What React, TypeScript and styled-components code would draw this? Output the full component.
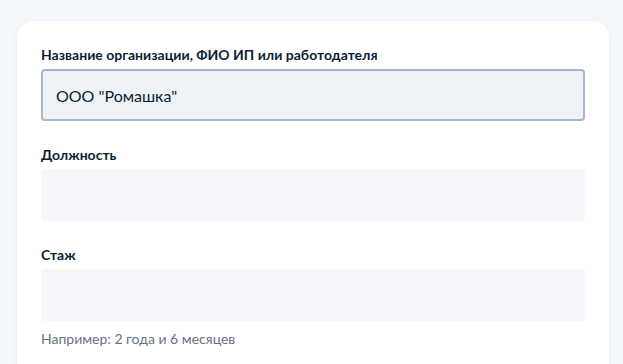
import React, { useState } from "react";
import styled, { createGlobalStyle } from "styled-components";

const GlobalStyle = createGlobalStyle`
    html, body {
        margin: 0;
        padding: 0;
        background: #f4f7fb;
        font-family: Lato, "Open Sans", "Liberation Sans", sans-serif;
        color: #0b1f33;
    }
`;

export default function App() {
    const [formData, setFormData] = useState({
        company: 'ООО "Ромашка"',
        position: "",
        experience: "",
    });

    const handleChange = (e: React.ChangeEvent<HTMLInputElement>) => {
        const { name, value } = e.target;
        setFormData((prev) => ({ ...prev, [name]: value }));
    };

    return (
        <Page>
            <GlobalStyle />
            <Card>
                <Field>
                    <Label htmlFor="company">Название организации, ФИО ИП или работодателя</Label>
                    <Input id="company" name="company" value={formData.company} onChange={handleChange} $active />
                </Field>
                <Field>
                    <Label htmlFor="position">Должность</Label>
                    <Input id="position" name="position" value={formData.position} onChange={handleChange} />
                </Field>
                <Field>
                    <Label htmlFor="experience">Стаж</Label>
                    <Input id="experience" name="experience" value={formData.experience} onChange={handleChange} />
                    <Hint>Например: 2 года и 6 месяцев</Hint>
                </Field>
            </Card>
        </Page>
    );
}

const Page = styled.div`
    padding: 21px 14px 0 17px;
    height: 364px;
    box-sizing: border-box;
    overflow: hidden;
`;

const Card = styled.div`
    background: #ffffff;
    border-radius: 16px;
    padding: 24px 24px 40px 24px;
    display: flex;
    flex-direction: column;
    gap: 24px;
    box-shadow: 0 1px 6px rgba(11, 31, 51, 0.04);
`;

const Field = styled.div`
    display: flex;
    flex-direction: column;
`;

const Label = styled.label`
    font-size: 14px;
    line-height: 20px;
    font-weight: 700;
    color: #0b1f33;
    margin-bottom: 4px;
`;

const Input = styled.input<{ $active?: boolean }>`
    height: 52px;
    box-sizing: border-box;
    border-radius: 4px;
    border: 2px solid ${(p) => (p.$active ? "#a9b7ca" : "#f5f7fa")};
    background: ${(p) => (p.$active ? "#eef2f7" : "#f5f7fa")};
    padding: 0 13px;
    font-family: inherit;
    font-size: 16px;
    color: #0b1f33;
    outline: none;
`;

const Hint = styled.div`
    margin-top: 8px;
    font-size: 14px;
    line-height: 20px;
    color: #66727f;
`;
